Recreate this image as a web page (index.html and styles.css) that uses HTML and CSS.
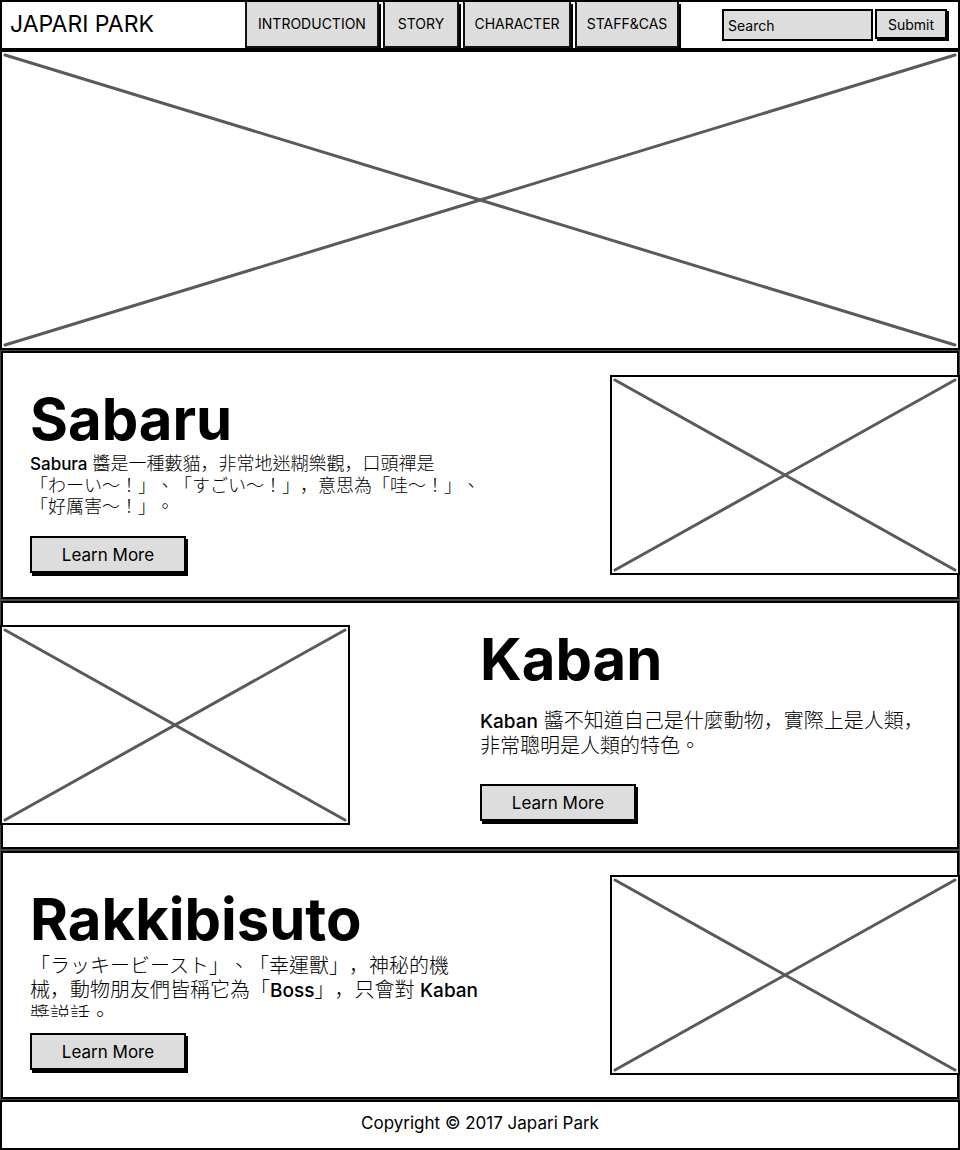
FILE: index.html
```html
<!DOCTYPE html>
<html lang="zh-Hant">
<head>
<meta charset="utf-8">
<meta name="viewport" content="width=device-width, initial-scale=1">
<title>Japari Park</title>
<link rel="stylesheet" href="styles.css">
</head>
<body>
<header class="topbar">
  <a class="brand" href="#">JAPARI PARK</a>
  <nav class="menu">
    <a class="menu-link" href="#">INTRODUCTION</a>
    <a class="menu-link" href="#">STORY</a>
    <a class="menu-link" href="#">CHARACTER</a>
    <a class="menu-link" href="#">STAFF&amp;CAS</a>
  </nav>
  <form class="search">
    <input class="search-box" type="text" placeholder="Search" aria-label="Search">
    <button class="search-submit" type="submit">Submit</button>
  </form>
</header>
<main>
  <div class="hero">
    <svg class="cross" aria-hidden="true"><line x1="0" y1="0" x2="100%" y2="100%"/><line x1="0" y1="100%" x2="100%" y2="0"/></svg>
  </div>
  <section class="feature">
    <div class="copy">
      <h2 class="name">Sabaru</h2>
      <p class="text text-small"><span class="latin">Sabura</span> 醬是一種藪貓<span lang="ja">，</span>非常地迷糊樂觀<span lang="ja">，</span>口頭禪是<br>「わーい～！」、「すごい～！」<span lang="ja">，</span>意思為「哇～！」、<br>「好厲害～！」。</p>
      <button class="more" type="button">Learn More</button>
    </div>
    <div class="picture">
      <svg class="cross" aria-hidden="true"><line x1="0" y1="0" x2="100%" y2="100%"/><line x1="0" y1="100%" x2="100%" y2="0"/></svg>
    </div>
  </section>
  <section class="feature">
    <div class="picture">
      <svg class="cross" aria-hidden="true"><line x1="0" y1="0" x2="100%" y2="100%"/><line x1="0" y1="100%" x2="100%" y2="0"/></svg>
    </div>
    <div class="copy copy-right">
      <h2 class="name">Kaban</h2>
      <p class="text"><span class="latin">Kaban</span> 醬不知道自己是什麼動物<span lang="ja">，</span>實際上是人類<span lang="ja">，</span><br>非常聰明是人類的特色。</p>
      <button class="more" type="button">Learn More</button>
    </div>
  </section>
  <section class="feature">
    <div class="copy">
      <h2 class="name">Rakkibisuto</h2>
      <p class="text text-clipped">「ラッキービースト」、「幸運獸」<span lang="ja">，</span>神秘的機<br>械<span lang="ja">，</span>動物朋友們皆稱它為「<span class="latin">Boss</span>」<span lang="ja">，</span>只會對 <span class="latin">Kaban</span><br>醬説話。</p>
      <button class="more" type="button">Learn More</button>
    </div>
    <div class="picture">
      <svg class="cross" aria-hidden="true"><line x1="0" y1="0" x2="100%" y2="100%"/><line x1="0" y1="100%" x2="100%" y2="0"/></svg>
    </div>
  </section>
</main>
<footer class="footer">Copyright © 2017 Japari Park</footer>
</body>
</html>
```

FILE: styles.css
```css
* { box-sizing: border-box; }

body {
  margin: 0;
  background: #fff;
  color: #000;
  font-family: Inter, "Noto Sans CJK JP", sans-serif;
}

button, input { font: inherit; color: inherit; }

.topbar {
  display: flex;
  align-items: flex-start;
  min-height: 50px;
  border: 2px solid #000;
}

.brand {
  flex: 0 0 243px;
  padding-left: 8px;
  font-size: 23px;
  line-height: 44px;
  color: inherit;
  text-decoration: none;
}

.menu {
  display: grid;
  grid-template-columns: 134px 76px 108px 104px;
  gap: 4px;
}

.menu-link {
  border: 2px solid #111;
  border-top: 0;
  background: #ddd;
  box-shadow: 2px 2px 0 #000;
  font-size: 14px;
  line-height: 44px;
  text-align: center;
  color: inherit;
  text-decoration: none;
}

.search {
  display: flex;
  gap: 2px;
  margin: 7px 11px 0 auto;
}

.search-box {
  width: 151px;
  height: 32px;
  padding: 0 4px;
  border: 2px solid #000;
  border-radius: 0;
  background: #ddd;
  font-size: 14px;
}

.search-box::placeholder { color: #000; opacity: 1; }

.search-submit {
  width: 72px;
  height: 30px;
  padding: 0;
  border: 2px solid #000;
  background: #ddd;
  box-shadow: 2px 2px 0 #000;
  font-size: 14px;
}

.hero {
  height: 300px;
  padding: 5px;
  box-shadow: inset 0 0 0 2px #000;
}

.cross {
  display: block;
  width: 100%;
  height: 100%;
  overflow: visible;
  stroke: #5a5a5a;
  stroke-width: 3;
  stroke-linecap: round;
}

.feature {
  display: flex;
  justify-content: space-between;
  min-height: 250px;
  box-shadow: inset 0 0 0 1px #444, inset 0 0 0 3px #000;
}

.picture {
  flex: 0 1 350px;
  height: 200px;
  margin-top: 25px;
  padding: 3px;
  border: 2px solid #000;
  background: #fff;
}

.copy {
  flex: 0 0 52%;
  padding: 39px 0 20px 30px;
}

.copy-right {
  flex-basis: 50%;
  padding: 29px 0 20px;
}

.name {
  margin: 0 0 4px;
  font-size: 58px;
  line-height: 60px;
  font-weight: 700;
}

.copy-right .name { margin-bottom: 20px; }

.text {
  margin: 0 0 16px;
  font-size: 20px;
  line-height: 24px;
  font-weight: 300;
  text-spacing-trim: space-all;
}

.text-small {
  margin-bottom: 19px;
  font-size: 18px;
  line-height: 21px;
}

.text-clipped {
  height: 64px;
  padding-top: 1px;
  overflow: hidden;
}

.copy-right .text { margin-bottom: 26px; }

.latin {
  font-size: 19px;
  font-weight: 500;
}

.text-small .latin { font-size: 17px; }

.more {
  display: block;
  width: 156px;
  height: 37px;
  padding: 0;
  border: 2px solid #000;
  background: #ddd;
  box-shadow: 2px 3px 0 #000;
  font-size: 17px;
}

.footer {
  min-height: 50px;
  border: 2px solid #000;
  font-size: 17px;
  line-height: 42px;
  text-align: center;
}
```
